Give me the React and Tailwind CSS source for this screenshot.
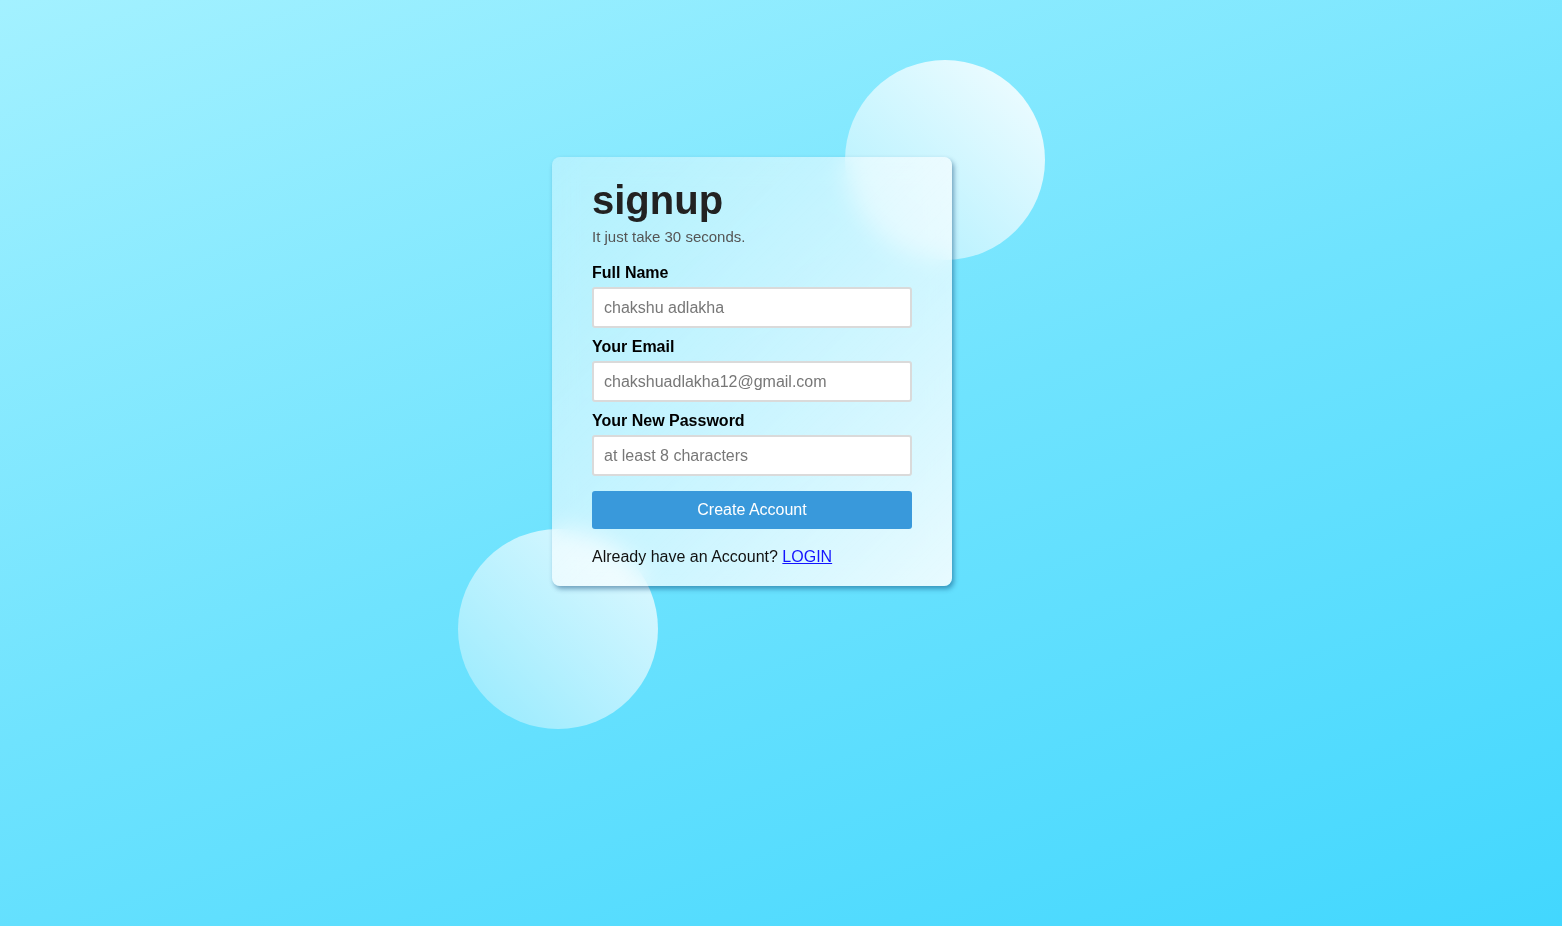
export default function App() {
  return (
    <div
      className="min-h-[926px] w-full bg-[linear-gradient(160deg,#a3f1ff_0%,#6fe3fe_50%,#42d7fe_100%)] overflow-hidden"
      style={{ fontFamily: '"Liberation Sans", Arial, sans-serif' }}
    >
      <div className="pl-[552px] pt-[157px]">
        <div className="relative w-[400px]">
          <div className="absolute left-[293px] top-[-97px] h-[200px] w-[200px] rounded-full bg-[linear-gradient(225deg,rgba(255,255,255,0.9),rgba(255,255,255,0.35))]" />
          <div className="absolute left-[-94px] top-[372px] h-[200px] w-[200px] rounded-full bg-[linear-gradient(45deg,rgba(255,255,255,0.3),rgba(255,255,255,0.8))]" />
          <div className="relative rounded-lg bg-[linear-gradient(135deg,rgba(255,255,255,0.35),rgba(255,255,255,0.85))] backdrop-blur-md shadow-[2px_3px_5px_rgba(0,60,110,0.45)] px-10 pt-[20px] pb-[20px]">
            <h1 className="text-[40px] font-bold leading-[46px] text-[#222]">signup</h1>
            <p className="text-[15px] leading-[18px] text-[#555] mt-[5px]">It just take 30 seconds.</p>
            <form className="mt-[18px]" onSubmit={(e) => e.preventDefault()}>
              <label className="block text-[16px] font-bold leading-[18px] text-black">Full Name</label>
              <input
                className="mt-[5px] block h-[41px] w-[320px] rounded-[3px] border-2 border-[#dadada] bg-white px-[10px] text-[16px] outline-none placeholder:text-[#777]"
                placeholder="chakshu adlakha"
              />
              <label className="mt-[10px] block text-[16px] font-bold leading-[18px] text-black">Your Email</label>
              <input
                className="mt-[5px] block h-[41px] w-[320px] rounded-[3px] border-2 border-[#dadada] bg-white px-[10px] text-[16px] outline-none placeholder:text-[#777]"
                placeholder="chakshuadlakha12@gmail.com"
              />
              <label className="mt-[10px] block text-[16px] font-bold leading-[18px] text-black">Your New Password</label>
              <input
                type="password"
                className="mt-[5px] block h-[41px] w-[320px] rounded-[3px] border-2 border-[#dadada] bg-white px-[10px] text-[16px] outline-none placeholder:text-[#777]"
                placeholder="at least 8 characters"
              />
              <button className="mt-[15px] block h-[38px] w-[320px] rounded-[3px] bg-[#3999db] text-[16px] text-white">
                Create Account
              </button>
            </form>
            <p className="mt-[19px] text-[16px] leading-[18px] text-[#111]">
              Already have an Account?{" "}
              <a href="#" className="text-[#1414ff] underline">LOGIN</a>
            </p>
          </div>
        </div>
      </div>
    </div>
  );
}
